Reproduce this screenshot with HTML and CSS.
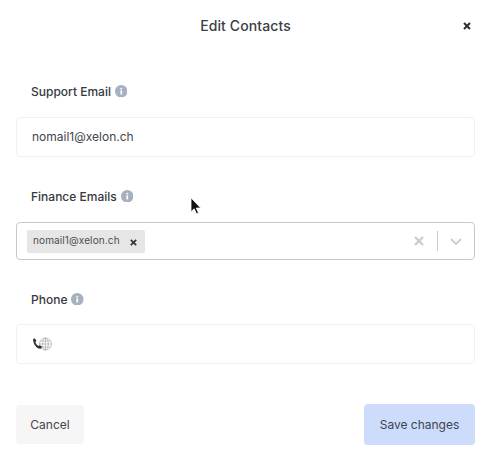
FILE: index.html
```html
<!DOCTYPE html>
<html lang="en">
<head>
<meta charset="utf-8">
<title>Edit Contacts</title>
<link rel="stylesheet" href="styles.css">
</head>
<body>
<main class="modal">
  <header class="modal-header">
    <h1 class="modal-title">Edit Contacts</h1>
    <button class="close" aria-label="Close">
      <svg width="8" height="8" viewBox="0 0 8 8"><path d="M1 1l6 6M7 1L1 7" stroke="#2b2f33" stroke-width="2"/></svg>
    </button>
  </header>
  <form class="fields">
    <div class="field">
      <div class="label">Support Email
        <svg class="info" width="12.500" height="12.500" viewBox="0 0 13 13"><circle cx="6.5" cy="6.5" r="6.5" fill="#a7b0bf"/><rect x="5.6" y="5.6" width="1.8" height="4.2" fill="#fff"/><rect x="5.6" y="3" width="1.8" height="1.6" fill="#fff"/></svg>
      </div>
      <div class="input"><span class="input-text">nomail1@xelon.ch</span></div>
    </div>
    <div class="field">
      <div class="label">Finance Emails
        <svg class="info" width="12.500" height="12.500" viewBox="0 0 13 13"><circle cx="6.5" cy="6.5" r="6.5" fill="#a7b0bf"/><rect x="5.6" y="5.6" width="1.8" height="4.2" fill="#fff"/><rect x="5.6" y="3" width="1.8" height="1.6" fill="#fff"/></svg>
      </div>
      <div class="select">
        <div class="values">
          <span class="tag"><span class="tag-text">nomail1@xelon.ch</span>
            <svg class="tag-x" width="7" height="7" viewBox="0 0 7 7"><path d="M.8.8l5.4 5.4M6.200.8L.8 6.200" stroke="#333" stroke-width="1.700"/></svg>
          </span>
        </div>
        <div class="indicators">
          <svg class="clear" width="10" height="10" viewBox="0 0 10 10"><path d="M1 1l8 8M9 1l-8 8" stroke="#cccccc" stroke-width="2.400"/></svg>
          <span class="sep"></span>
          <svg class="chev" width="12" height="7" viewBox="0 0 12 7"><path d="M1 1l5 5 5-5" fill="none" stroke="#cccccc" stroke-width="1.800"/></svg>
        </div>
      </div>
    </div>
    <div class="field phone-field">
      <div class="label">Phone
        <svg class="info" width="12.500" height="12.500" viewBox="0 0 13 13"><circle cx="6.5" cy="6.5" r="6.5" fill="#a7b0bf"/><rect x="5.6" y="5.6" width="1.8" height="4.2" fill="#fff"/><rect x="5.6" y="3" width="1.8" height="1.6" fill="#fff"/></svg>
      </div>
      <div class="input phone">
        <svg width="21" height="14" viewBox="0 0 21 14">
          <g fill="none" stroke="#a0a0a0" stroke-width=".6">
            <circle cx="13.500" cy="7" r="6"/>
            <ellipse cx="13.500" cy="7" rx="2.800" ry="6"/>
            <path d="M13.500 1v12M7.500 7h12M8.500 4h10M8.500 10h10"/>
          </g>
          <path d="M1 2.300 2.800 1.200l1.700 2.800-1.200 1.100c.6 1.800 1.800 3.200 3.500 4l1-1.200 2.400 2.200-1.500 1.700C5 12.400 1.200 7.500 1 2.300z" fill="#333"/>
        </svg>
      </div>
    </div>
  </form>
  <footer class="actions">
    <button type="button" class="btn cancel">Cancel</button>
    <button type="button" class="btn save">Save changes</button>
  </footer>
</main>
<svg class="cursor" width="12" height="19" viewBox="0 0 12 19"><path d="M1 .8v14l3.200-3 2.300 5 2-.9-2.200-4.800h4.400z" fill="#111" stroke="#fff" stroke-width=".8"/></svg>
</body>
</html>
```
FILE: styles.css
```css
* { box-sizing: border-box; }
html, body { margin: 0; background: #fff; }
body {
  width: 488px;
  height: 464px;
  overflow: hidden;
  position: relative;
  font-family: Inter, "Liberation Sans", sans-serif;
  color: #3a3d42;
}
.modal {
  width: 459px;
  margin-left: 16px;
  padding-top: 16px;
}
.modal-header {
  height: 20px;
  display: flex;
  align-items: center;
  justify-content: center;
  position: relative;
}
.modal-title {
  margin: 0;
  font-size: 14px;
  font-weight: 500;
  line-height: 20px;
  letter-spacing: .1px;
  color: #3b3e42;
}
.close {
  position: absolute;
  right: 4px;
  top: 6px;
  padding: 0;
  border: 0;
  background: none;
  display: flex;
}
.fields {
  display: flex;
  flex-direction: column;
  gap: 29px;
  margin-top: 45px;
}
.label {
  height: 20px;
  padding-left: 15px;
  margin-bottom: 16px;
  display: flex;
  align-items: center;
  gap: 4px;
  font-size: 12px;
  font-weight: 500;
  color: #36393d;
}
.phone-field .label { margin-bottom: 15px; }
.input {
  height: 40px;
  padding-left: 15px;
  padding-bottom: 2px;
  display: flex;
  align-items: center;
  border: 1px solid #f0f0f0;
  border-radius: 4px;
  font-size: 12px;
  color: #42454a;
}
.select {
  height: 38px;
  display: flex;
  align-items: center;
  justify-content: space-between;
  border: 1px solid #c8c8c8;
  border-radius: 4px;
  padding: 0 12px 0 10px;
}
.tag {
  height: 23px;
  width: 118px;
  display: flex;
  align-items: center;
  justify-content: space-between;
  padding: 0 8px 3px 6px;
  background: #e6e6e6;
  border-radius: 2px;
  font-size: 10px;
  letter-spacing: .12px;
  color: #4a4d52;
}
.tag-x { margin-top: 5px; }
.indicators {
  display: flex;
  align-items: center;
}
.clear { margin-left: -1px; margin-right: 1px; }
.sep {
  width: 1px;
  height: 20px;
  background: #cccccc;
  margin: 0 12px;
}
.phone { padding-left: 15px; padding-bottom: 0; }
.actions {
  display: flex;
  justify-content: space-between;
  align-items: center;
  margin-top: 40px;
}
.btn {
  border: 0;
  padding: 0;
  font: 400 12px Inter, "Liberation Sans", sans-serif;
  color: #42454a;
  border-radius: 4px;
}
.cancel {
  width: 68px;
  height: 39px;
  background: #f6f6f6;
}
.save {
  width: 111px;
  height: 41px;
  background: #cddcfb;
  color: #3d4454;
}
.cursor {
  position: absolute;
  left: 190px;
  top: 197px;
}
```
